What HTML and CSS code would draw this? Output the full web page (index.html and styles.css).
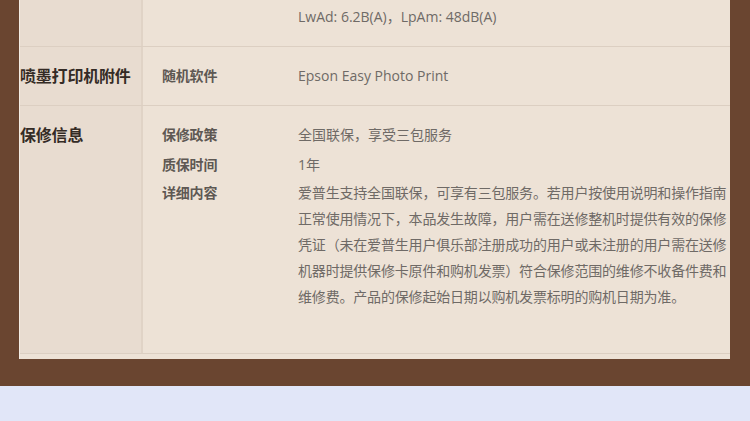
FILE: index.html
```html
<!DOCTYPE html>
<html lang="zh-CN">
<head>
  <meta charset="UTF-8" />
  <meta name="viewport" content="width=device-width, initial-scale=1.0" />
  <title>规格参数</title>
  <link rel="stylesheet" href="styles.css">
</head>
<body>

  <div class="page">
    <div class="spec">

      <div class="group first">
        <div class="group-name"></div>
        <div class="group-items">
          <div class="item">
            <span class="label"></span>
            <span class="value">LwAd: 6.2B(A)，LpAm: 48dB(A)</span>
          </div>
        </div>
      </div>

      <div class="group">
        <div class="group-name">喷墨打印机附件</div>
        <div class="group-items">
          <div class="item">
            <span class="label">随机软件</span>
            <span class="value">Epson Easy Photo Print</span>
          </div>
        </div>
      </div>

      <div class="group">
        <div class="group-name">保修信息</div>
        <div class="group-items">
          <div class="item">
            <span class="label">保修政策</span>
            <span class="value">全国联保，享受三包服务</span>
          </div>
          <div class="item">
            <span class="label">质保时间</span>
            <span class="value">1年</span>
          </div>
          <div class="item detail">
            <span class="label">详细内容</span>
            <p class="value">爱普生支持全国联保，可享有三包服务。若用户按使用说明和操作指南正常使用情况下，本品发生故障，用户需在送修整机时提供有效的保修凭证（未在爱普生用户俱乐部注册成功的用户或未注册的用户需在送修机器时提供保修卡原件和购机发票）符合保修范围的维修不收备件费和维修费。产品的保修起始日期以购机发票标明的购机日期为准。</p>
          </div>
        </div>
      </div>

      <div class="spec-foot"></div>
    </div>
  </div>

</body>
</html>
```

FILE: styles.css
```css
body {
  margin: 0;
  background-color: #e1e6f8;
  font-family: "Open Sans", "Noto Sans CJK SC", sans-serif;
  font-size: 14px;
  height: 421px;
  overflow: hidden;
}

.page {
  background-color: #6a4530;
  padding: 0 20px 27px 19px;
}

.spec {
  background-color: #ede2d6;
  border-left: 1px solid #f3ece4;
}

.group {
  display: flex;
  border-bottom: 1px solid #dccfc2;
}

.group-name {
  width: 121px;
  flex-shrink: 0;
  background-color: #e8dcd0;
  border-right: 2px solid #e0d3c6;
  padding: 14px 0 0 0;
  font-size: 16px;
  font-weight: bold;
  line-height: 30px;
  color: #342b25;
  letter-spacing: -0.2px;
}

.group-items {
  flex: 1;
  padding: 14px 0 14px 19px;
}

.first .group-name,
.first .group-items {
  padding-top: 2px;
}

.item {
  display: flex;
  line-height: 30px;
}

.label {
  width: 136px;
  flex-shrink: 0;
  font-size: 14px;
  font-weight: bold;
  color: #5e5853;
  letter-spacing: -0.2px;
}

.value {
  color: #6f6a66;
}

.detail {
  line-height: 26px;
}

.detail .value {
  width: 431px;
  margin: 0 0 29px 0;
  letter-spacing: -0.18px;
}

.spec-foot {
  height: 5px;
}
```
